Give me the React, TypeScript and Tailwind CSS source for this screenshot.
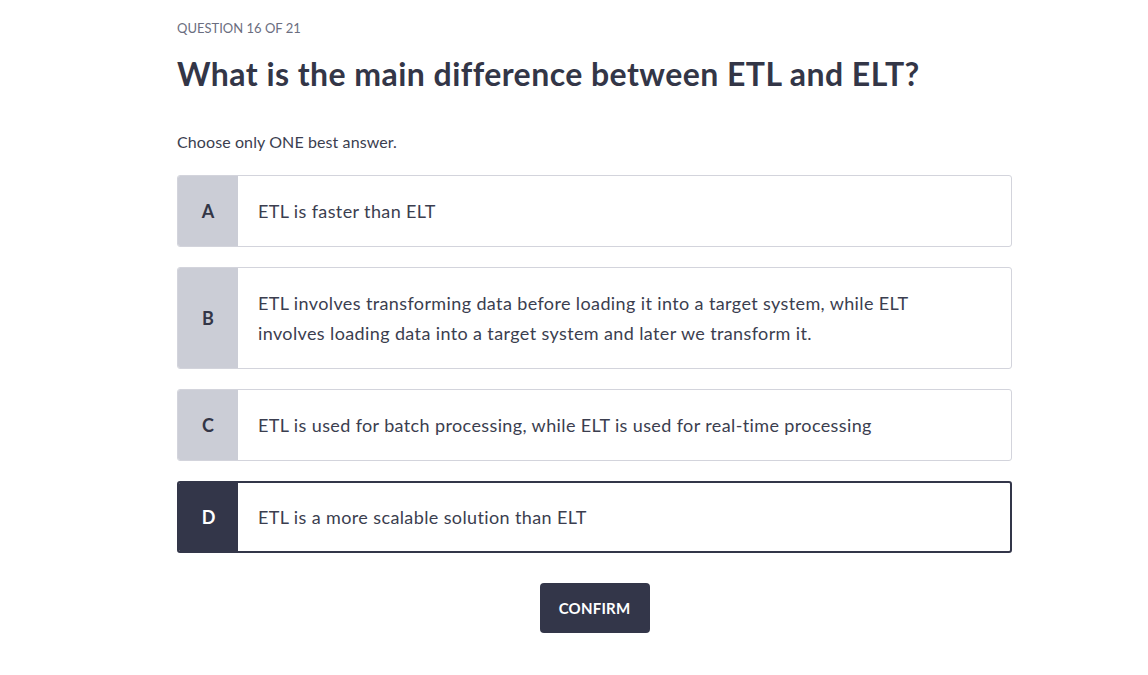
import React from "react";

const options = [
  { letter: "A", text: "ETL is faster than ELT" },
  {
    letter: "B",
    text: "ETL involves transforming data before loading it into a target system, while ELT involves loading data into a target system and later we transform it.",
  },
  { letter: "C", text: "ETL is used for batch processing, while ELT is used for real-time processing" },
  { letter: "D", text: "ETL is a more scalable solution than ELT" },
];

export default function App() {
  const selected = "D";
  return (
    <div className="min-h-[675px] w-full bg-white" style={{ fontFamily: "Lato, 'Noto Sans', sans-serif" }}>
      <div className="ml-[177px] w-[835px] pt-[19px]">
        <div className="text-[13px] leading-[18px] text-[#6b6e80]">QUESTION 16 OF 21</div>
        <h1 className="mt-[17px] text-[32px] leading-[40px] font-bold tracking-[0.45px] text-[#333647]">
          What is the main difference between ETL and ELT?
        </h1>
        <p className="mt-[37px] text-[16px] leading-[22px] tracking-[0.1px] text-[#3b3e4f]">Choose only ONE best answer.</p>
        <div className="mt-[22px] flex flex-col gap-[20px]">
          {options.map((o) => {
            const sel = o.letter === selected;
            return (
              <div
                key={o.letter}
                className={
                  sel
                    ? "flex h-[72px] overflow-hidden rounded-[3px] border-2 border-[#333649] bg-white"
                    : "flex min-h-[72px] overflow-hidden rounded-[3px] border border-[#d3d4dc] bg-white"
                }
              >
                <div
                  className={
                    sel
                      ? "flex w-[59px] shrink-0 items-center justify-center bg-[#333649] text-[18px] font-bold text-white"
                      : "flex w-[60px] shrink-0 items-center justify-center bg-[#cbcdd6] text-[18px] font-bold text-[#333647]"
                  }
                >
                  {o.letter}
                </div>
                <div className="flex flex-1 items-center py-[20px] pl-[20px] pr-[80px] text-[18px] leading-[30px] tracking-[0.38px] text-[#3b3e4f]">
                  {o.text}
                </div>
              </div>
            );
          })}
        </div>
        <div className="mt-[30px] flex justify-center">
          <button className="h-[50px] w-[110px] rounded-[4px] bg-[#333649] text-[15px] font-bold tracking-[0.2px] text-white">
            CONFIRM
          </button>
        </div>
      </div>
    </div>
  );
}
